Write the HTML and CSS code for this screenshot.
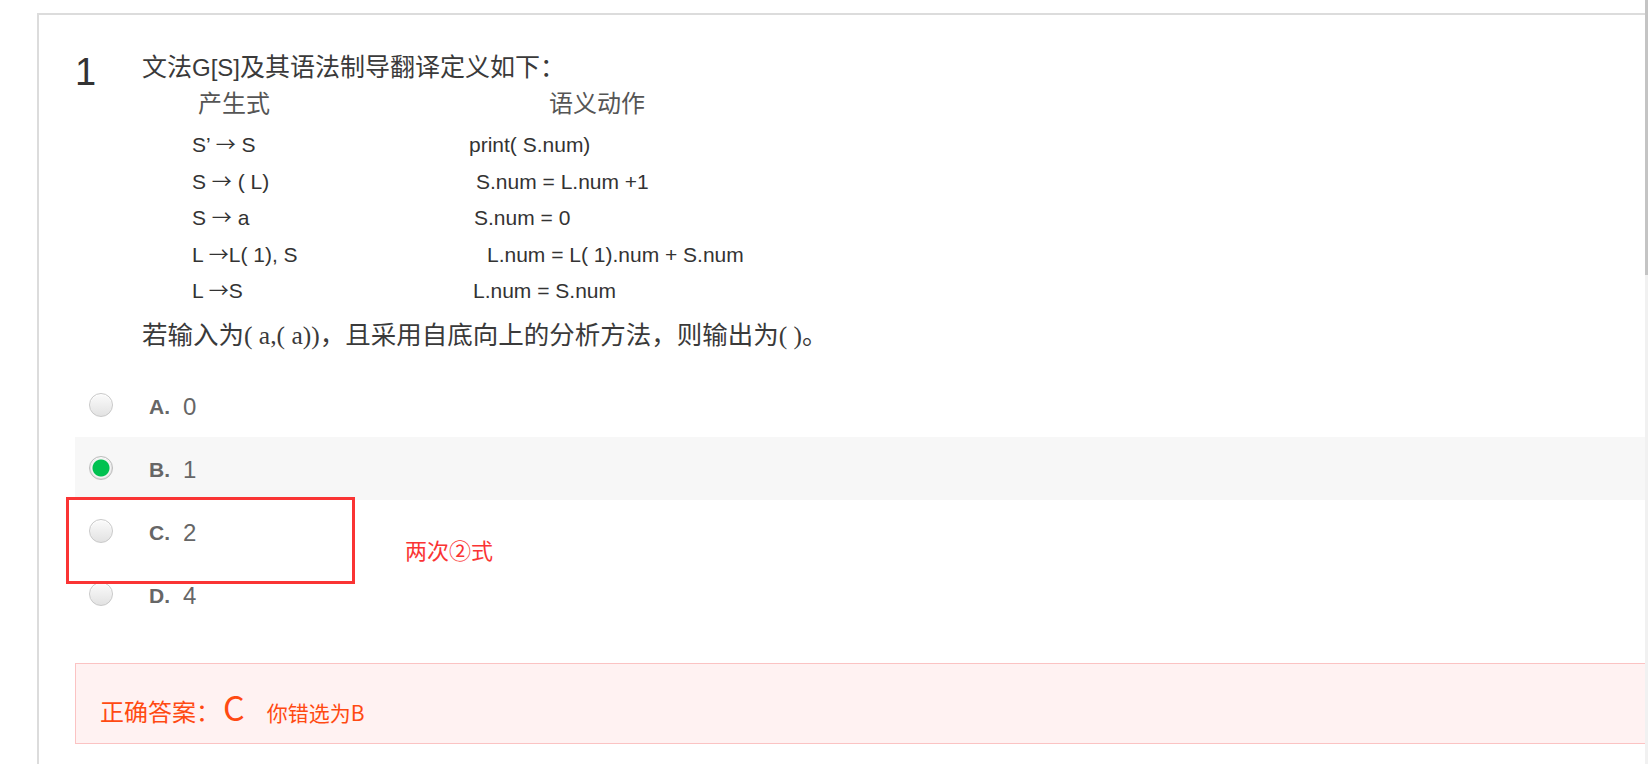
FILE: index.html
```html
<!DOCTYPE html>
<html lang="zh-CN">
<head>
<meta charset="utf-8">
<title>题目 1</title>
<link rel="stylesheet" href="styles.css">
</head>
<body>
<div class="page">
  <div class="viewport">
    <div class="card">
      <div class="question">
        <div class="qnum">1</div>
        <div class="qbody">
          <p class="qline">文法<span class="sans">G[S]</span>及其语法制导翻译定义如下：</p>
          <div class="thead"><span>产生式</span><span>语义动作</span></div>
          <div class="grammar">
            <div class="prod">S’ <span class="arr">→</span> S</div><div class="act">print( S.num)</div>
            <div class="prod">S <span class="arr">→</span> ( L)</div><div class="act off7">S.num = L.num +1</div>
            <div class="prod">S <span class="arr">→</span> a</div><div class="act off5">S.num = 0</div>
            <div class="prod">L <span class="arr">→</span>L( 1), S</div><div class="act off18">L.num = L( 1).num + S.num</div>
            <div class="prod">L <span class="arr">→</span>S</div><div class="act off4">L.num = S.num</div>
          </div>
          <p class="qline last">若输入为( a,( a))，且采用自底向上的分析方法，则输出为( )。</p>
        </div>
      </div>
      <ul class="options">
        <li class="opt"><span class="radio"></span><span class="lbl">A.</span><span class="val">0</span></li>
        <li class="opt selected"><span class="radio"></span><span class="lbl">B.</span><span class="val">1</span></li>
        <li class="opt"><span class="radio"></span><span class="lbl">C.</span><span class="val">2</span></li>
        <li class="opt"><span class="radio"></span><span class="lbl">D.</span><span class="val">4</span></li>
      </ul>
      <div class="answer">
        <span class="ans-title">正确答案：</span><span class="ans-key">C</span><span class="ans-note">你错选为B</span>
      </div>
      <div class="annot-box"></div>
      <div class="annot-text">两次②式</div>
    </div>
  </div>
  <div class="scrollbar"><div class="thumb"></div></div>
</div>
</body>
</html>
```

FILE: styles.css
```css
html, body {
  margin: 0;
  padding: 0;
  background: #fff;
}

body {
  font-family: "Liberation Sans", "Noto Sans CJK SC", sans-serif;
  color: #333;
}

.page {
  display: flex;
  width: 1648px;
  height: 764px;
  overflow: hidden;
}

.viewport {
  flex: 1;
  overflow: hidden;
  padding: 13px 0 0 37px;
}

.scrollbar {
  width: 3px;
  background: #f1f1f1;
}

.thumb {
  height: 275px;
  background: #c4c4c4;
}

.card {
  position: relative;
  border-top: 2px solid #dcdcdc;
  border-left: 2px solid #dcdcdc;
  padding: 0 0 0 36px;
  min-height: 760px;
}

.question {
  display: flex;
  padding-top: 35px;
}

.qnum {
  width: 67px;
  flex: none;
  font-family: "Liberation Sans", sans-serif;
  font-size: 38px;
  line-height: 36px;
  margin-top: 4px;
  color: #333;
}

.qbody {
  flex: 1;
}

.qline {
  margin: 0;
  font-family: "Liberation Serif", "Noto Sans CJK SC", serif;
  font-size: 25px;
  line-height: 36px;
  color: #3a3a3a;
}

.qline .sans {
  font-family: "Liberation Sans", sans-serif;
  font-size: 24px;
}

.qline.last {
  margin-top: 8px;
  font-size: 25.5px;
}

.thead {
  display: grid;
  grid-template-columns: 351px auto;
  margin-left: 56px;
  font-family: "Liberation Serif", "Noto Sans CJK SC", serif;
  font-size: 24px;
  line-height: 37px;
  color: #555;
}

.grammar {
  display: grid;
  grid-template-columns: 277px auto;
  margin: 4px 0 0 50px;
  font-family: "Liberation Sans", sans-serif;
  font-size: 21px;
  line-height: 36.5px;
  color: #333;
}

.arr {
  font-family: "Noto Sans CJK SC", sans-serif;
  font-size: 20px;
  line-height: 0;
}

.off4 { padding-left: 4px; }
.off5 { padding-left: 5px; }
.off7 { padding-left: 7px; }
.off18 { padding-left: 18px; }

.options {
  list-style: none;
  margin: 20px 0 0 0;
  padding: 0;
}

.opt {
  display: flex;
  align-items: center;
  height: 63px;
  padding-left: 14px;
  color: #666;
}

.opt.selected {
  background: #f7f7f7;
}

.radio {
  width: 24px;
  height: 24px;
  box-sizing: border-box;
  border-radius: 50%;
  border: 1px solid #c9c9c9;
  background: linear-gradient(#fbfbfb, #e2e2e2);
  box-shadow: inset 0 1px 1px #fff;
  flex: none;
}

.opt.selected .radio {
  border-color: #bdbdbd;
  background: radial-gradient(circle, #00c150 0 8px, #f4f4f4 9px 9.5px, #dedede 10.5px);
}

.lbl {
  margin-left: 36px;
  font-weight: bold;
  font-size: 21px;
  line-height: 30px;
  padding-top: 3px;
}

.val {
  margin-left: 13px;
  font-size: 24px;
  line-height: 30px;
  padding-top: 3px;
}

.answer {
  display: flex;
  align-items: baseline;
  box-sizing: border-box;
  height: 81px;
  margin-top: 37px;
  padding: 25px 0 0 24px;
  background: #fff2f2;
  border: 1px solid #fbc3c3;
  border-right: none;
  color: #ff4a12;
  font-family: "Noto Sans CJK SC", sans-serif;
}

.ans-title {
  font-size: 24px;
  line-height: 36px;
}

.ans-key {
  margin-left: 3px;
  font-size: 34px;
  line-height: 36px;
}

.ans-note {
  margin-left: 22px;
  font-size: 21px;
  line-height: 36px;
}

.annot-box {
  position: absolute;
  left: 27px;
  top: 482px;
  width: 289px;
  height: 87px;
  box-sizing: border-box;
  border: 3px solid #fa3434;
}

.annot-text {
  position: absolute;
  left: 366px;
  top: 519px;
  font-family: "Noto Sans CJK SC", sans-serif;
  font-size: 22px;
  line-height: 30px;
  color: #fa3434;
}
```
